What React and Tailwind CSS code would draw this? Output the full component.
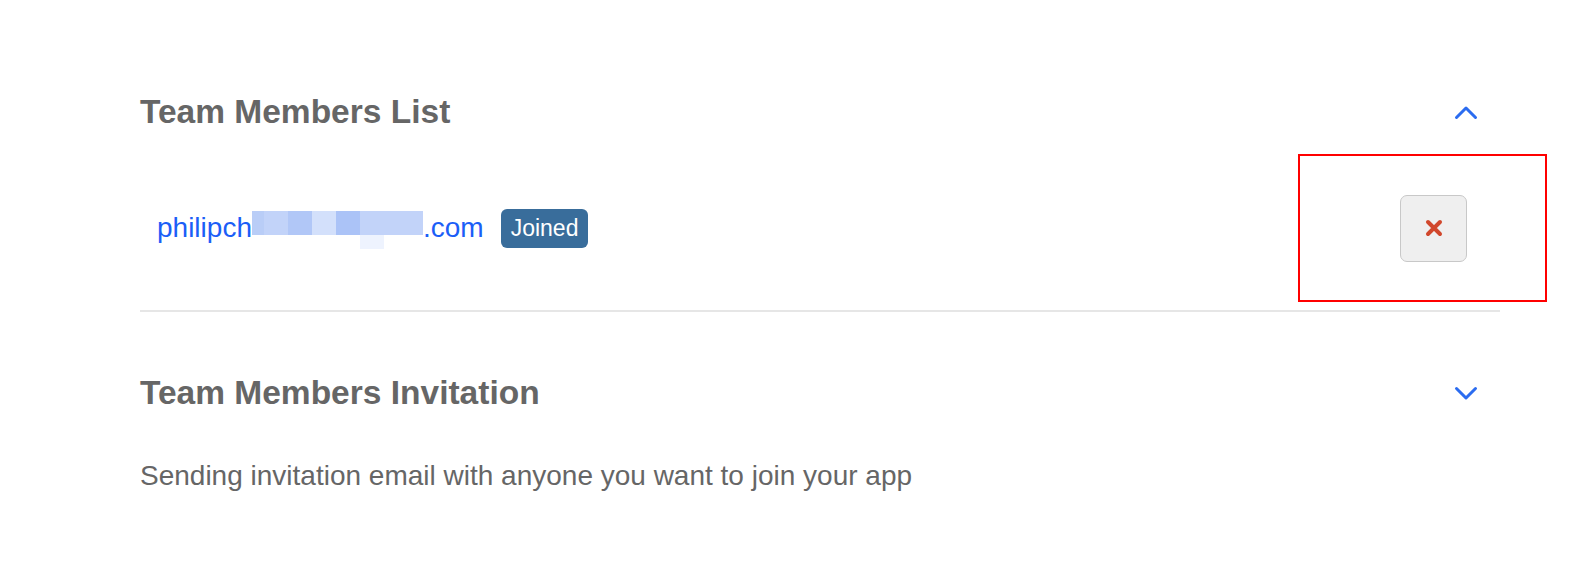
import React from 'react';

const ChevronUp = () => (
    <svg width="24" height="15" viewBox="0 0 24 15" fill="none" stroke="#2b6cf0" strokeWidth="3" strokeLinecap="round" strokeLinejoin="round">
        <path d="M2.5 12.5 L12 3 L21.5 12.5" />
    </svg>
);

const ChevronDown = () => (
    <svg width="24" height="15" viewBox="0 0 24 15" fill="none" stroke="#2b6cf0" strokeWidth="3" strokeLinecap="round" strokeLinejoin="round">
        <path d="M2.5 2.5 L12 12 L21.5 2.5" />
    </svg>
);

const CloseIcon = () => (
    <svg width="20" height="20" viewBox="0 0 20 20" fill="none" stroke="#d1472c" strokeWidth="4" strokeLinecap="round">
        <path d="M4 4 L16 16 M16 4 L4 16" />
    </svg>
);

// pixelated part of the address, as in the screenshot
const Mosaic = () => (
    <span className="relative inline-flex h-[24px] mt-[-1px] self-start">
        <span className="w-[12px] h-full bg-[#b9cdf7]"></span>
        <span className="w-[24px] h-full bg-[#c2d3f9]"></span>
        <span className="w-[24px] h-full bg-[#b1c7f7]"></span>
        <span className="w-[24px] h-full bg-[#d3e0fb]"></span>
        <span className="w-[24px] h-full bg-[#abc3f7]"></span>
        <span className="w-[63px] h-full bg-[#c2d3f9]"></span>
        <span className="absolute top-full left-[108px] w-[24px] h-[14px] bg-[#eef3fe]"></span>
    </span>
);

const App = () => {
    return (
        <div className="min-h-[574px] bg-white pt-[92px]" style={{ fontFamily: '"Liberation Sans", Arial, sans-serif' }}>
            <div className="ml-[140px] w-[1360px]">
                {/* Team Members List */}
                <div className="flex items-center justify-between pr-[22px]">
                    <h2 className="text-[33.5px] leading-[40px] font-bold text-[#666666]">Team Members List</h2>
                    <ChevronUp />
                </div>

                <div className="mt-[22px] flex items-center justify-between">
                    <div className="flex items-center pl-[17px] gap-[17px]">
                        <a className="flex items-start text-[28px] leading-[32px] text-[#1b5ef7]">
                            <span>philipch</span>
                            <Mosaic />
                            <span>.com</span>
                        </a>
                        <span className="h-[39px] px-[10px] flex items-center rounded-[6px] bg-[#396d9b] text-white text-[23px]">
                            Joined
                        </span>
                    </div>
                    <div className="mr-[-47px] w-[249px] h-[148px] border-2 border-[#ff0000] flex items-center pl-[100px]">
                        <button className="w-[67px] h-[67px] rounded-[7px] border-[1.5px] border-[#c8c8c8] bg-[#efefef] flex items-center justify-center">
                            <CloseIcon />
                        </button>
                    </div>
                </div>

                <div className="mt-[8px] h-[2px] bg-[#e6e6e6]"></div>

                {/* Team Members Invitation */}
                <div className="mt-[61px] flex items-center justify-between pr-[22px]">
                    <h2 className="text-[33.5px] leading-[40px] font-bold text-[#666666]">Team Members Invitation</h2>
                    <ChevronDown />
                </div>

                <p className="mt-[45px] text-[28px] leading-[36px] text-[#666666]">
                    Sending invitation email with anyone you want to join your app
                </p>
            </div>
        </div>
    );
};

export default App;
